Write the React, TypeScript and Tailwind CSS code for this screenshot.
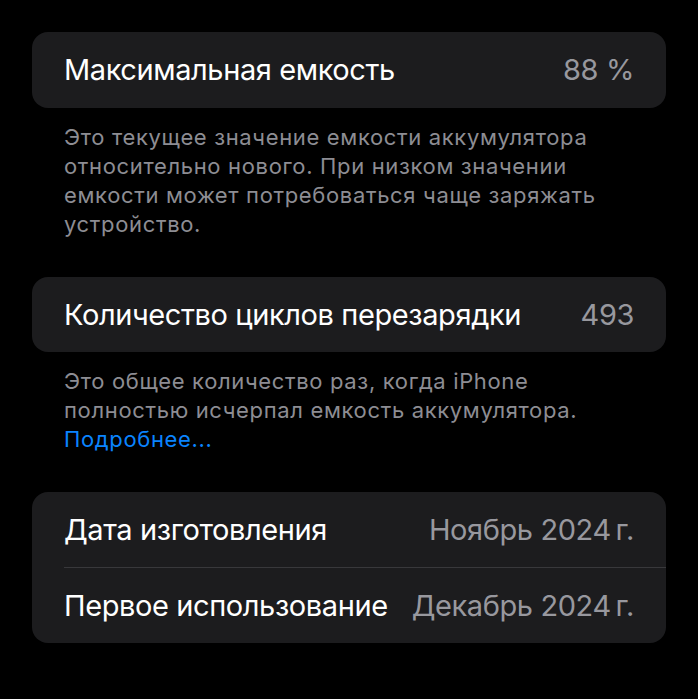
import React, { FC } from "react";

const font = { fontFamily: "Inter, 'Noto Sans', sans-serif" };

const Row: FC<{ label: string; value: string; divider?: boolean }> = ({
  label,
  value,
  divider,
}) => {
  return (
    <div className="relative flex h-[75.5px] items-center justify-between pl-8 pr-8">
      <span className="text-[29px] tracking-[-0.4px] text-white">{label}</span>
      <span className="text-[29px] tracking-[-0.4px] text-[#98989e]">
        {value}
      </span>
      {divider ? (
        <div className="absolute bottom-0 left-8 right-0 h-px bg-[#38383b]" />
      ) : (
        <></>
      )}
    </div>
  );
};

const Footer: FC<{ children: React.ReactNode }> = ({ children }) => {
  return (
    <p className="px-8 pt-[15px] text-[22px] leading-[29px] tracking-[0.65px] text-[#8d8d93]">
      {children}
    </p>
  );
};

const App: FC = () => {
  return (
    <div className="min-h-screen bg-black px-8 pt-8" style={font}>
      <div className="overflow-hidden rounded-2xl bg-[#1c1c1e]">
        <Row label="Максимальная емкость" value="88 %" />
      </div>
      <Footer>
        Это текущее значение емкости аккумулятора
        <br />
        относительно нового. При низком значении
        <br />
        емкости может потребоваться чаще заряжать
        <br />
        устройство.
      </Footer>

      <div className="mt-[38px] overflow-hidden rounded-2xl bg-[#1c1c1e]">
        <Row label="Количество циклов перезарядки" value="493" />
      </div>
      <Footer>
        Это общее количество раз, когда iPhone
        <br />
        полностью исчерпал емкость аккумулятора.
        <br />
        <span className="text-[#0a84ff]">Подробнее...</span>
      </Footer>

      <div className="mt-[38px] overflow-hidden rounded-2xl bg-[#1c1c1e]">
        <Row label="Дата изготовления" value={"Ноябрь 2024\u2009г."} divider />
        <Row label="Первое использование" value={"Декабрь 2024\u2009г."} />
      </div>
    </div>
  );
};

export default App;
